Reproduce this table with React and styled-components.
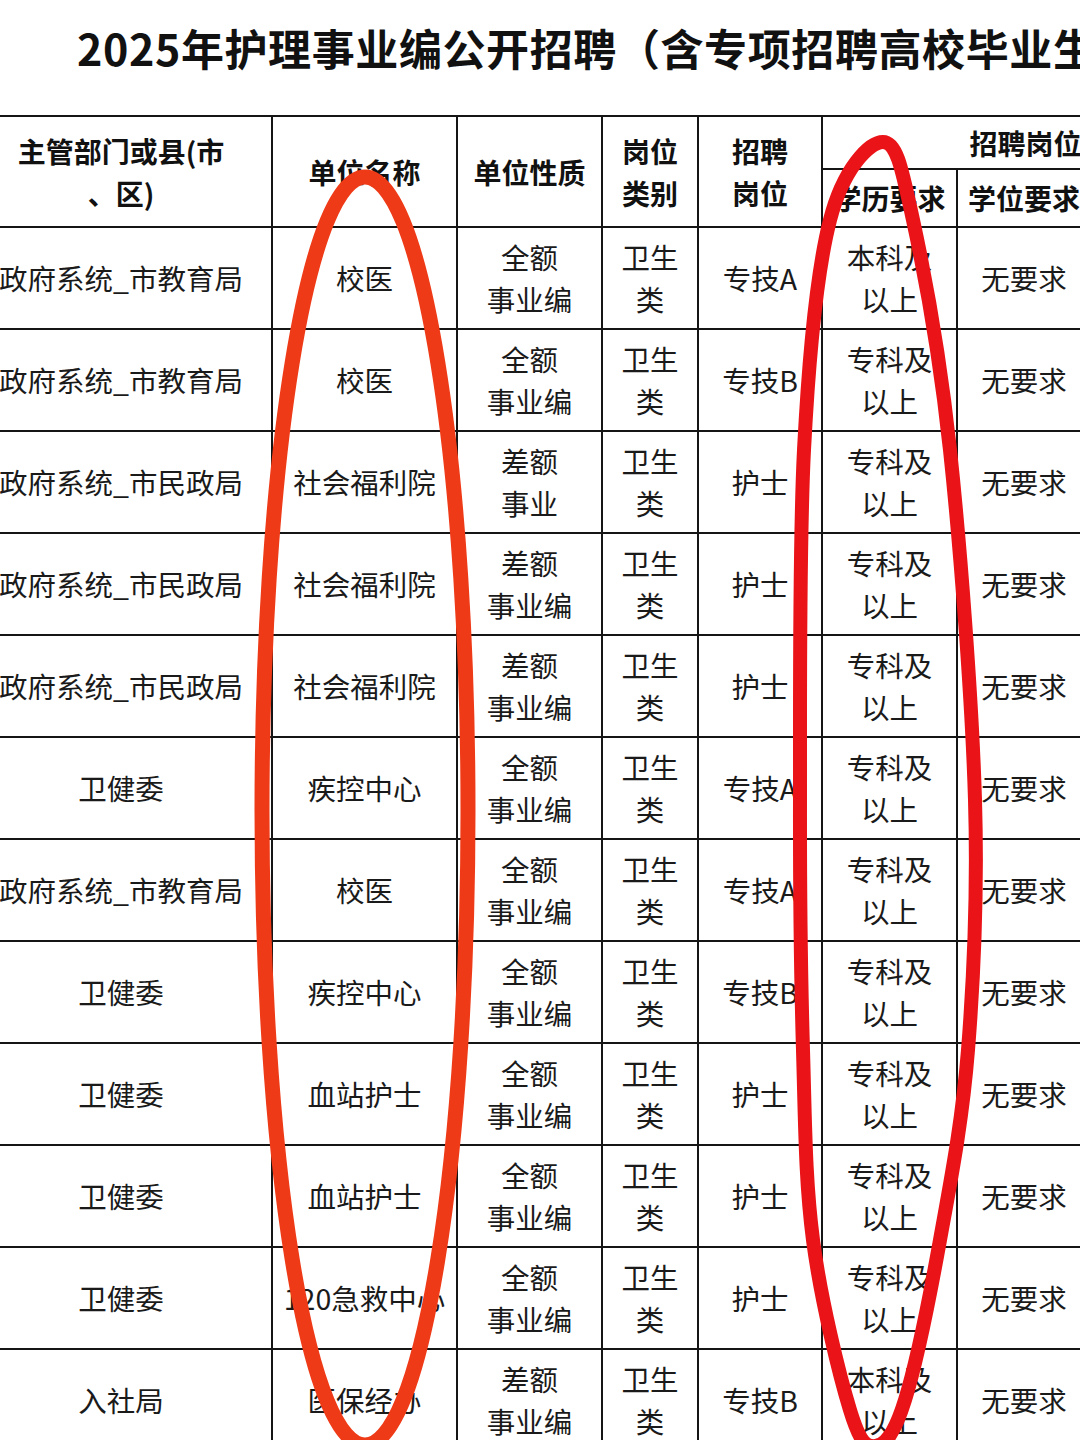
import React from "react";
import styled, { createGlobalStyle } from "styled-components";

const rows = [
  ["政府系统_市教育局", "校医", "全额\n事业编", "卫生\n类", "专技A", "本科及\n以上", "无要求"],
  ["政府系统_市教育局", "校医", "全额\n事业编", "卫生\n类", "专技B", "专科及\n以上", "无要求"],
  ["政府系统_市民政局", "社会福利院", "差额\n事业", "卫生\n类", "护士", "专科及\n以上", "无要求"],
  ["政府系统_市民政局", "社会福利院", "差额\n事业编", "卫生\n类", "护士", "专科及\n以上", "无要求"],
  ["政府系统_市民政局", "社会福利院", "差额\n事业编", "卫生\n类", "护士", "专科及\n以上", "无要求"],
  ["卫健委", "疾控中心", "全额\n事业编", "卫生\n类", "专技A", "专科及\n以上", "无要求"],
  ["政府系统_市教育局", "校医", "全额\n事业编", "卫生\n类", "专技A", "专科及\n以上", "无要求"],
  ["卫健委", "疾控中心", "全额\n事业编", "卫生\n类", "专技B", "专科及\n以上", "无要求"],
  ["卫健委", "血站护士", "全额\n事业编", "卫生\n类", "护士", "专科及\n以上", "无要求"],
  ["卫健委", "血站护士", "全额\n事业编", "卫生\n类", "护士", "专科及\n以上", "无要求"],
  ["卫健委", "120急救中心", "全额\n事业编", "卫生\n类", "护士", "专科及\n以上", "无要求"],
  ["入社局", "医保经办", "差额\n事业编", "卫生\n类", "专技B", "本科及\n以上", "无要求"],
];

const colWidths = [302, 185, 145, 96, 124, 135, 134, 250];

// hand drawn marker loop round the 学历要求 column
const rightLoop = [
  [883, 142], [913, 220], [950, 450], [975, 800], [968, 1050], [940, 1240],
  [905, 1400], [876, 1446], [850, 1410], [813, 1240], [803, 1050], [800, 800],
  [804, 450], [830, 220],
];

const smoothPath = (pts) => {
  const n = pts.length;
  let d = `M ${pts[0][0]} ${pts[0][1]}`;
  for (let i = 0; i < n; i++) {
    const p0 = pts[(i - 1 + n) % n];
    const p1 = pts[i];
    const p2 = pts[(i + 1) % n];
    const p3 = pts[(i + 2) % n];
    const c1x = p1[0] + (p2[0] - p0[0]) / 6;
    const c1y = p1[1] + (p2[1] - p0[1]) / 6;
    const c2x = p2[0] - (p3[0] - p1[0]) / 6;
    const c2y = p2[1] - (p3[1] - p1[1]) / 6;
    d += ` C ${c1x} ${c1y} ${c2x} ${c2y} ${p2[0]} ${p2[1]}`;
  }
  return d + " Z";
};

const App = () => {
  return (
    <Page>
      <GlobalStyle />
      <Title>2025年护理事业编公开招聘（含专项招聘高校毕业生）岗位表</Title>
      <Table>
        <colgroup>
          {colWidths.map((w, i) => (
            <col key={i} style={{ width: w }} />
          ))}
        </colgroup>
        <thead>
          <HeadRow $h={53}>
            <Th rowSpan={2}>{"主管部门或县(市\n、区)"}</Th>
            <Th rowSpan={2}>单位名称</Th>
            <Th rowSpan={2}>单位性质</Th>
            <Th rowSpan={2}>{"岗位\n类别"}</Th>
            <Th rowSpan={2}>{"招聘\n岗位"}</Th>
            <Th colSpan={3}>招聘岗位资格条件</Th>
          </HeadRow>
          <HeadRow $h={58}>
            <Th>学历要求</Th>
            <Th>学位要求</Th>
            <Th>专业要求</Th>
          </HeadRow>
        </thead>
        <tbody>
          {rows.map((r, i) => (
            <BodyRow key={i}>
              {r.map((v, j) => (
                <Td key={j}>{v}</Td>
              ))}
              <Td>护理学</Td>
            </BodyRow>
          ))}
        </tbody>
      </Table>
      <Marks viewBox="0 0 1080 1440">
        <ellipse cx="365" cy="811" rx="103" ry="634" fill="none" stroke="#ef3a17" strokeWidth="15" />
        <path d={smoothPath(rightLoop)} fill="none" stroke="#ea1318" strokeWidth="14" />
      </Marks>
    </Page>
  );
};

const GlobalStyle = createGlobalStyle`
  html, body {
    margin: 0;
    padding: 0;
    background: #fff;
  }
  body {
    font-family: "Noto Sans CJK SC", "Noto Sans", sans-serif;
    color: #141414;
  }
`;

const Page = styled.div`
  position: relative;
  width: 1080px;
  height: 1440px;
  overflow: hidden;
  background: #fff;
`;

const Title = styled.h1`
  margin: 0;
  padding: 20px 0 0 77px;
  height: 115px;
  box-sizing: border-box;
  font-size: 43px;
  line-height: 54px;
  letter-spacing: 0.6px;
  font-weight: 700;
  color: #111;
  white-space: nowrap;
`;

const Table = styled.table`
  margin-left: -31px;
  border-collapse: collapse;
  table-layout: fixed;
  width: ${colWidths.reduce((a, b) => a + b, 0)}px;
`;

const HeadRow = styled.tr`
  height: ${(p) => p.$h}px;
`;

const BodyRow = styled.tr`
  height: 102px;
`;

const cell = `
  border: 2px solid #151515;
  padding: 0;
  text-align: center;
  vertical-align: middle;
  white-space: pre-line;
  font-size: 28px;
  line-height: 42px;
`;

const Th = styled.th`
  ${cell}
  font-weight: 700;
  color: #111;
`;

const Td = styled.td`
  ${cell}
  font-size: 28.5px;
  font-weight: 400;
  color: #1a1a1a;
`;

const Marks = styled.svg`
  position: absolute;
  left: 0;
  top: 0;
  width: 1080px;
  height: 1440px;
  pointer-events: none;
`;

export default App;
